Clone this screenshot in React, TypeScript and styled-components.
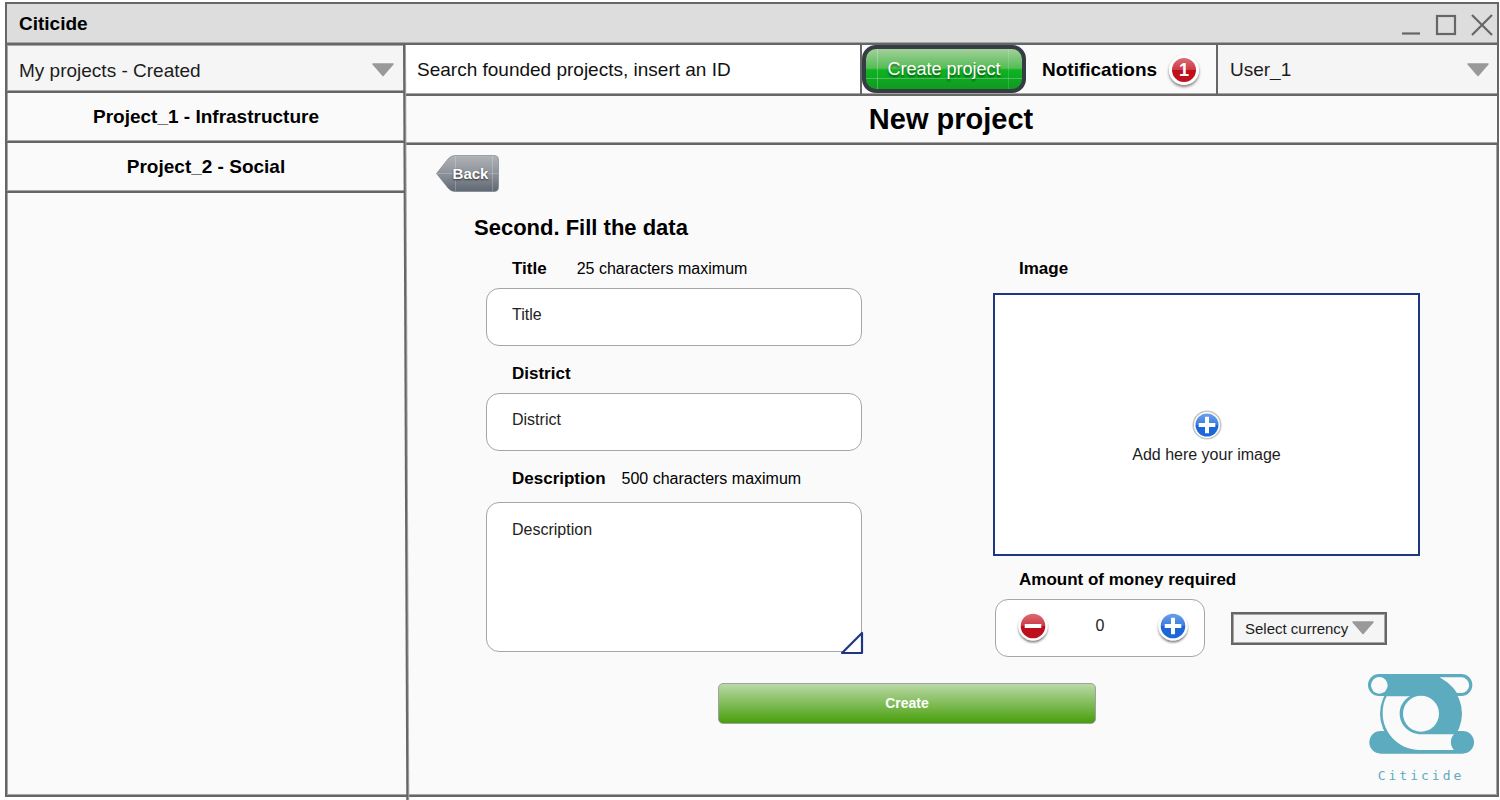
import React, { useState } from "react";
import styled, { createGlobalStyle, css } from "styled-components";

const ink = "#666666";
const soft = "#a6a6a6";
const navy = "#1f3684";
const paper = "#fafafa";
const teal = "#5dabbe";

const GlobalStyle = createGlobalStyle`
  *, *::before, *::after { box-sizing: border-box; }
  body {
    margin: 0;
    background: #ffffff;
    color: #000000;
    font-family: "Liberation Sans", Arial, sans-serif;
    font-size: 16px;
  }
  button, input, select, textarea { font: inherit; color: inherit; }
  button { cursor: pointer; }
`;

const bottomRule = css`
  border-bottom: 2px solid ${ink};
  box-shadow: inset 0 -1px ${soft};
`;

const Page = styled.div`
  display: flex;
  min-height: 100vh;
  padding: 2px 1px 3px 5px;
`;

const Frame = styled.div`
  display: flex;
  flex: 1;
  flex-direction: column;
  min-width: 0;
  border: 2px solid ${ink};
  background: ${paper};
`;

const TitleBar = styled.header`
  ${bottomRule}
  display: flex;
  align-items: center;
  justify-content: space-between;
  height: 41px;
  padding: 0 4px 0 12px;
  background: #dddddd;
  font-size: 19px;
  font-weight: bold;
`;

const WindowControls = styled.div`
  display: flex;
  gap: 14px;
  padding-top: 2px;
`;

const WindowButton = styled.button`
  display: flex;
  padding: 0;
  border: 0;
  background: none;

  svg {
    width: 22px;
    height: 22px;
    fill: none;
    stroke: ${ink};
    stroke-width: 2.2;
  }
`;

const Body = styled.div`
  display: grid;
  flex: 1;
  grid-template-columns: 398px minmax(0, 1fr);
`;

const Sidebar = styled.aside`
  position: relative;
  box-shadow: inset 1px 0 ${soft}, inset 0 -1px ${soft};

  &::after {
    content: "";
    position: absolute;
    z-index: 1;
    top: 0;
    bottom: -5px;
    left: 396px;
    width: 2px;
    background: ${ink};
    box-shadow: 1px 0 ${soft};
    transform: skewX(0.25deg);
    transform-origin: top left;
  }
`;

const ProjectList = styled.ul`
  margin: 0;
  padding: 0;
  list-style: none;
`;

const ProjectButton = styled.button`
  ${bottomRule}
  display: block;
  width: 100%;
  height: 50px;
  padding: 0;
  border-width: 0 0 2px;
  background: none;
  font-size: 19px;
  font-weight: bold;
`;

const SelectShell = styled.div<{ $kind: "side" | "user" | "currency" }>`
  display: grid;
  grid-template-columns: minmax(0, 1fr);
  align-items: center;
  background: #f5f5f5;

  > * { grid-area: 1 / 1; }
  > svg { justify-self: end; margin-right: 10px; pointer-events: none; }

  select {
    appearance: none;
    width: 100%;
    height: 100%;
    padding: 0 36px 0 12px;
    border: 0;
    border-radius: 0;
    background: transparent;
    color: #1c1c1c;
    font-size: 19px;
  }

  ${({ $kind }) =>
    $kind === "side" &&
    css`
      height: 48px;
      border-bottom: 2px solid ${ink};
      box-shadow: inset 0 0 0 1px ${soft};
      select { padding-top: 4px; }
      > svg { margin-top: 4px; }
    `}
  ${({ $kind }) =>
    $kind === "user" &&
    css`
      ${bottomRule}
      width: 281px;
      border-left: 2px solid ${ink};
      > svg { margin-right: 7px; }
    `}
  ${({ $kind }) =>
    $kind === "currency" &&
    css`
      width: 156px;
      height: 33px;
      border: 2px solid ${ink};
      box-shadow: inset 0 0 0 1px ${soft};
      select { font-size: 15px; }
    `}
`;

const Main = styled.main`
  display: flex;
  flex-direction: column;
  min-width: 0;
`;

const Toolbar = styled.div`
  display: flex;
  height: 51px;
`;

const SearchInput = styled.input`
  ${bottomRule}
  flex: 1;
  min-width: 0;
  padding: 0 12px;
  border-width: 0 2px 2px 0;
  border-style: solid;
  border-color: ${ink};
  border-radius: 0;
  background: #ffffff;
  font-size: 19px;

  &::placeholder { color: #111111; opacity: 1; }
`;

const ToolbarCell = styled.div`
  ${bottomRule}
  display: flex;
`;

const CreateProjectButton = styled.button`
  width: 164px;
  height: 48px;
  padding: 0;
  border: 4px solid #353c44;
  border-radius: 14px;
  background:
    linear-gradient(rgba(255, 255, 255, 0.25), rgba(255, 255, 255, 0.25)) 11px 0 / 1px 100% no-repeat,
    linear-gradient(rgba(255, 255, 255, 0.15), rgba(255, 255, 255, 0.15)) 142px 0 / 1px 100% no-repeat,
    linear-gradient(rgba(255, 255, 255, 0.25), rgba(255, 255, 255, 0.25)) 0 29px / 100% 1px no-repeat,
    linear-gradient(#a3cf9b, #55bd55 48%, #0eb421 52%, #109a20);
  color: #ffffff;
  font-size: 18px;
  text-shadow: 0 2px 2px rgba(0, 0, 0, 0.5);
`;

const Notifications = styled.div`
  ${bottomRule}
  display: flex;
  align-items: center;
  gap: 12px;
  width: 190px;
  padding-left: 16px;
  font-size: 19px;
  font-weight: bold;
`;

const Badge = styled.span`
  display: grid;
  place-items: center;
  width: 30px;
  height: 30px;
  border: 3px solid #ffffff;
  border-radius: 50%;
  background: linear-gradient(#dc6c75, #cc3a45 50%, #bd0e1c 51%, #c3101f);
  box-shadow: 0 2px 3px rgba(0, 0, 0, 0.5);
  color: #ffffff;
  font-size: 18px;
  line-height: 20px;
`;

const PageHeading = styled.h1`
  ${bottomRule}
  height: 49px;
  margin: 0;
  font-size: 29px;
  line-height: 46px;
  text-align: center;
`;

const Content = styled.form`
  display: flex;
  flex: 1;
  flex-direction: column;
  padding-top: 10px;
  box-shadow: inset -1px -1px ${soft};
`;

const BackButton = styled.button`
  display: grid;
  align-items: center;
  align-self: flex-start;
  width: 64px;
  height: 37px;
  margin-left: 31px;
  padding: 0;
  border: 0;
  background: none;
  color: #ffffff;
  font-size: 15px;
  font-weight: bold;
  text-shadow: 0 1px 2px rgba(0, 0, 0, 0.7);

  > * { grid-area: 1 / 1; }
  span { padding-left: 5px; }
`;

const StepHeading = styled.h2`
  margin: 22px 0 16px 69px;
  font-size: 22px;
  line-height: 28px;
`;

const Columns = styled.div`
  display: grid;
  grid-template-columns: minmax(0, 376fr) minmax(0, 427fr);
  gap: 131px;
  padding: 0 77px 0 81px;
`;

const Column = styled.div<{ $gap: number }>`
  display: flex;
  flex-direction: column;
  gap: ${({ $gap }) => $gap}px;
`;

const Field = styled.div<{ $gap?: number }>`
  display: flex;
  flex-direction: column;
  gap: ${({ $gap = 8 }) => $gap}px;
`;

const FieldHead = styled.div<{ $gap?: number }>`
  display: flex;
  align-items: center;
  gap: ${({ $gap = 0 }) => $gap}px;
  padding-left: 26px;
  line-height: 22px;

  label { font-size: 17px; font-weight: bold; }
`;

const box = css`
  width: 100%;
  border: 1px solid ${soft};
  border-radius: 13px;
  background: #ffffff;
`;

const TextInput = styled.input`
  ${box}
  height: 58px;
  padding: 0 25px 4px;

  &::placeholder { color: #222222; opacity: 1; }
`;

const TextAreaShell = styled.div`
  position: relative;
  display: flex;

  svg {
    position: absolute;
    right: -2px;
    bottom: -3px;
    pointer-events: none;
  }
`;

const TextArea = styled.textarea`
  ${box}
  height: 150px;
  padding: 18px 25px;
  resize: none;

  &::placeholder { color: #222222; opacity: 1; }
`;

const ImageDrop = styled.button`
  display: flex;
  flex-direction: column;
  align-items: center;
  justify-content: center;
  gap: 3px;
  width: 100%;
  height: 263px;
  padding: 22px 0 0;
  border: 2px solid ${navy};
  background: #ffffff;
  color: #1c1c1c;
`;

const MoneyRow = styled.div`
  display: flex;
  align-items: center;
  gap: 26px;
  padding-left: 2px;
`;

const Stepper = styled.div`
  display: flex;
  align-items: center;
  justify-content: space-between;
  width: 210px;
  height: 58px;
  padding: 0 13px 4px 19px;
  border: 1px solid ${soft};
  border-radius: 13px;
  background: #ffffff;

  input {
    width: 60px;
    padding: 0 6px 0 0;
    border: 0;
    background: none;
    color: #222222;
    text-align: center;
  }
`;

const RoundButton = styled.button`
  display: flex;
  padding: 0;
  border: 0;
  background: none;
`;

const Footer = styled.div`
  display: flex;
  align-items: flex-start;
  justify-content: space-between;
  padding: 16px 23px 10px 313px;
`;

const CreateButton = styled.button`
  width: 378px;
  height: 41px;
  margin-top: 10px;
  padding: 0 0 2px;
  border: 1px solid #a0a0a0;
  border-radius: 5px;
  background: linear-gradient(#bad9a6, #489f0b);
  color: #ffffff;
  font-size: 14px;
  font-weight: bold;
`;

const Brand = styled.div`
  display: flex;
  flex-direction: column;
  align-items: center;
  gap: 13px;
  color: ${teal};
  font-family: "DejaVu Sans Mono", monospace;
  font-size: 13px;
  line-height: 18px;
  letter-spacing: 3px;
`;

const Arrow = () => (
  <svg width="24" height="14" viewBox="0 0 24 14" aria-hidden="true">
    <path d="M2 1H22L12 12.5Z" fill="#999999" stroke="#999999" strokeWidth="1.5" strokeLinejoin="round" />
  </svg>
);

type RoundIconProps = { sign: "plus" | "minus"; ring?: boolean };

const RoundIcon = ({ sign, ring }: RoundIconProps) => {
  const id = `tone-${sign}`;
  const [top, middle, bottom] =
    sign === "plus" ? ["#6c9fe8", "#3a7de0", "#1c66d8"] : ["#dc6c75", "#cc3a45", "#bd0e1c"];
  return (
    <svg width="36" height="36" viewBox="0 0 36 36" aria-hidden="true">
      <defs>
        <linearGradient id={id} x1="0" y1="0" x2="0" y2="1">
          <stop offset="0" stopColor={top} />
          <stop offset="0.5" stopColor={middle} />
          <stop offset="0.52" stopColor={bottom} />
          <stop offset="1" stopColor={bottom} />
        </linearGradient>
        <filter id="drop" x="-20%" y="-20%" width="140%" height="150%">
          <feDropShadow dx="0" dy="2" stdDeviation="1.2" floodOpacity="0.5" />
        </filter>
      </defs>
      {ring ? (
        <circle cx="18" cy="18" r="13.8" fill="#ffffff" stroke="#c6c6c6" strokeWidth="1.6" />
      ) : (
        <circle cx="18" cy="18" r="14.6" fill="#ffffff" filter="url(#drop)" />
      )}
      <circle cx="18" cy="18" r={ring ? 11.5 : 12.3} fill={`url(#${id})`} />
      <path
        d={sign === "plus" ? "M9.7 18H26.3M18 9.7V26.3" : "M9.7 18H26.3"}
        stroke="#ffffff"
        strokeWidth="4"
      />
    </svg>
  );
};

const Logo = () => (
  <svg width="106" height="81" viewBox="54 39 318 243" role="img" aria-label="Citicide logo">
    <g fill={teal}>
      <rect x="54" y="42" width="313" height="66" rx="33" />
      <rect x="58" y="213" width="314" height="68" rx="34" />
      <ellipse cx="213" cy="161" rx="123" ry="119" />
    </g>
    <g fill={paper}>
      <circle cx="88" cy="76" r="25" />
      <path d="M268 52H334A23.500 23.500 0 0 1 334 99H321C307 78 290 64 268 52Z" />
      <path d="M110 109H180C160 121 149 139 149 160C149 196 178 223 213 223H312A34 34 0 0 0 312 270H205C142 267 98 216 98 160C98 142 102 122 110 109Z" />
      <circle cx="213" cy="161" r="54" />
    </g>
  </svg>
);

export default function App() {
  const [amount, setAmount] = useState(0);

  return (
    <>
      <GlobalStyle />
      <Page>
        <Frame>
          <TitleBar>
            <span>Citicide</span>
            <WindowControls>
              <WindowButton aria-label="Minimize">
                <svg viewBox="0 0 22 22"><path d="M3 19.500H21" /></svg>
              </WindowButton>
              <WindowButton aria-label="Maximize">
                <svg viewBox="0 0 22 22"><rect x="2" y="2" width="18" height="18" /></svg>
              </WindowButton>
              <WindowButton aria-label="Close">
                <svg viewBox="0 0 22 22"><path d="M1 1L21 21M21 1L1 21" /></svg>
              </WindowButton>
            </WindowControls>
          </TitleBar>
          <Body>
            <Sidebar>
              <SelectShell $kind="side">
                <select aria-label="Project filter">
                  <option>My projects - Created</option>
                </select>
                <Arrow />
              </SelectShell>
              <ProjectList>
                <li><ProjectButton>Project_1 - Infrastructure</ProjectButton></li>
                <li><ProjectButton>Project_2 - Social</ProjectButton></li>
              </ProjectList>
            </Sidebar>
            <Main>
              <Toolbar>
                <SearchInput aria-label="Search projects" placeholder="Search founded projects, insert an ID" />
                <ToolbarCell>
                  <CreateProjectButton>Create project</CreateProjectButton>
                </ToolbarCell>
                <Notifications>
                  <span>Notifications</span>
                  <Badge>1</Badge>
                </Notifications>
                <SelectShell $kind="user">
                  <select aria-label="User">
                    <option>User_1</option>
                  </select>
                  <Arrow />
                </SelectShell>
              </Toolbar>
              <PageHeading>New project</PageHeading>
              <Content onSubmit={(e) => e.preventDefault()}>
                <BackButton type="button">
                  <svg width="64" height="37" viewBox="0 0 64 37" aria-hidden="true">
                    <defs>
                      <linearGradient id="back" x1="0" y1="0" x2="0" y2="1">
                        <stop offset="0" stopColor="#b0b4b8" />
                        <stop offset="0.5" stopColor="#8d929a" />
                        <stop offset="1" stopColor="#5f6772" />
                      </linearGradient>
                    </defs>
                    <path
                      d="M0.500 18.500L12 4Q15 0.500 19 0.500H58Q62.500 0.500 62.500 5V32Q62.500 36.500 58 36.500H19Q15 36.500 12 33Z"
                      fill="url(#back)"
                      stroke="#747b84"
                      strokeOpacity="0.6"
                    />
                    <path d="M1 18.500H62M19.500 1V36M56.500 1V36" stroke="#ffffff" strokeOpacity="0.22" />
                  </svg>
                  <span>Back</span>
                </BackButton>
                <StepHeading>Second. Fill the data</StepHeading>
                <Columns>
                  <Column $gap={17}>
                    <Field>
                      <FieldHead $gap={30}>
                        <label htmlFor="title">Title</label>
                        <span>25 characters maximum</span>
                      </FieldHead>
                      <TextInput id="title" placeholder="Title" maxLength={25} />
                    </Field>
                    <Field>
                      <FieldHead>
                        <label htmlFor="district">District</label>
                      </FieldHead>
                      <TextInput id="district" placeholder="District" />
                    </Field>
                    <Field $gap={12}>
                      <FieldHead $gap={16}>
                        <label htmlFor="description">Description</label>
                        <span>500 characters maximum</span>
                      </FieldHead>
                      <TextAreaShell>
                        <TextArea id="description" placeholder="Description" maxLength={500} />
                        <svg width="24" height="24" viewBox="0 0 24 24" aria-hidden="true">
                          <path d="M2 22L22 2V22Z" fill="#ffffff" stroke={navy} strokeWidth="2.2" strokeLinejoin="round" />
                        </svg>
                      </TextAreaShell>
                    </Field>
                  </Column>
                  <Column $gap={13}>
                    <Field $gap={13}>
                      <FieldHead>
                        <label htmlFor="image">Image</label>
                      </FieldHead>
                      <ImageDrop id="image" type="button">
                        <RoundIcon sign="plus" ring />
                        <span>Add here your image</span>
                      </ImageDrop>
                    </Field>
                    <Field>
                      <FieldHead>
                        <label htmlFor="amount">Amount of money required</label>
                      </FieldHead>
                      <MoneyRow>
                        <Stepper>
                          <RoundButton type="button" aria-label="Decrease" onClick={() => setAmount((n) => Math.max(0, n - 1))}>
                            <RoundIcon sign="minus" />
                          </RoundButton>
                          <input
                            id="amount"
                            inputMode="numeric"
                            value={amount}
                            onChange={(e) => setAmount(Number(e.target.value) || 0)}
                          />
                          <RoundButton type="button" aria-label="Increase" onClick={() => setAmount((n) => n + 1)}>
                            <RoundIcon sign="plus" />
                          </RoundButton>
                        </Stepper>
                        <SelectShell $kind="currency">
                          <select aria-label="Currency">
                            <option>Select currency</option>
                          </select>
                          <Arrow />
                        </SelectShell>
                      </MoneyRow>
                    </Field>
                  </Column>
                </Columns>
                <Footer>
                  <CreateButton type="submit">Create</CreateButton>
                  <Brand>
                    <Logo />
                    <span>Citicide</span>
                  </Brand>
                </Footer>
              </Content>
            </Main>
          </Body>
        </Frame>
      </Page>
    </>
  );
}
